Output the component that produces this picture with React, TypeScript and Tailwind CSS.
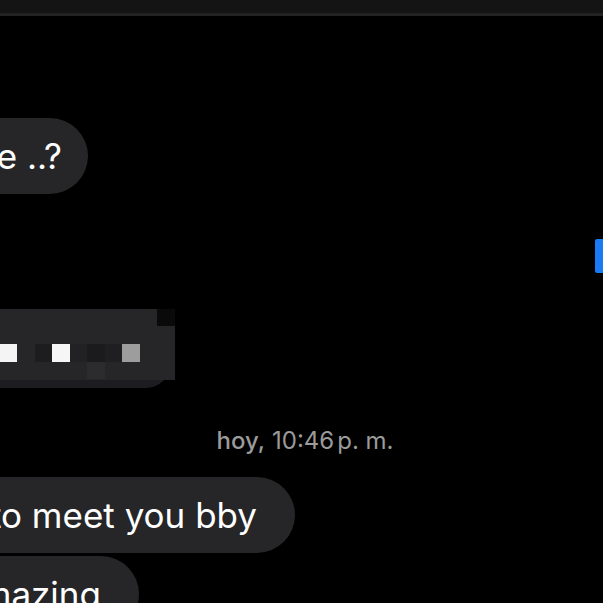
import React from 'react';

// mosaic cells over the censored bubble (x, y, colour) in px relative to the block
const mosaicCells = [
  { x: 0, y: 35, w: 17, h: 18, color: 'bg-[#f4f4f4]' },
  { x: 35, y: 35, w: 17, h: 18, color: 'bg-[#1d1d1f]' },
  { x: 52, y: 35, w: 18, h: 18, color: 'bg-[#f6f6f6]' },
  { x: 70, y: 35, w: 17, h: 18, color: 'bg-[#222224]' },
  { x: 87, y: 35, w: 18, h: 18, color: 'bg-[#1b1b1d]' },
  { x: 87, y: 53, w: 18, h: 17, color: 'bg-[#2c2c2e]' },
  { x: 105, y: 35, w: 17, h: 18, color: 'bg-[#1f1f21]' },
  { x: 122, y: 35, w: 18, h: 18, color: 'bg-[#9d9d9d]' },
  { x: 157, y: 0, w: 18, h: 17, color: 'bg-[#0a0a0a]' },
];

const bubble = 'shrink-0 bg-[#262628] rounded-[38px] h-[76px] flex items-center justify-end whitespace-nowrap text-white text-[35px] leading-none';

export default function App() {
  return (
    <div
      className="w-[603px] h-[603px] overflow-hidden bg-black flex flex-col"
      style={{ fontFamily: 'Inter, Roboto, "Noto Sans", sans-serif' }}
    >
      {/* top bar */}
      <div className="h-[16px] shrink-0 bg-[#141414] border-b-[3px] border-[#222222]" />

      {/* incoming bubble */}
      <div className={`${bubble} mt-[102px] w-[300px] -ml-[212px] pr-[26px]`}>sure ..?</div>

      {/* outgoing bubble edge */}
      <div className="mt-[45px] self-end w-[8px] h-[34px] bg-[#1a7af6] rounded-l-[2px] shrink-0" />

      {/* censored bubble */}
      <div className="mt-[36px] relative w-[175px] h-[79px] shrink-0">
        <div className="absolute left-0 top-0 w-[170px] h-[79px] bg-[#1c1c21] rounded-br-[24px]" />
        <div className="absolute left-0 top-0 w-[175px] h-[71px] bg-[#262628]">
          {mosaicCells.map((c, i) => (
            <div
              key={i}
              className={`absolute ${c.color}`}
              style={{ left: c.x, top: c.y, width: c.w, height: c.h }}
            />
          ))}
        </div>
      </div>

      {/* timestamp */}
      <div className="shrink-0 mt-[41px] h-[24px] flex items-center justify-center pl-[7px] text-[24px] text-[#9b9b9b] leading-none">
        <span className="font-medium">hoy,</span>
        <span className="ml-[7px]">10:46</span>
        <span className="ml-[3px]">p. m.</span>
      </div>

      {/* incoming bubbles */}
      <div className={`${bubble} mt-[24px] w-[500px] -ml-[205px] pr-[38px]`}>happy to meet you bby</div>
      <div className={`${bubble} mt-[3px] w-[300px] -ml-[161px] pr-[38px]`}>amazing</div>
    </div>
  );
}
